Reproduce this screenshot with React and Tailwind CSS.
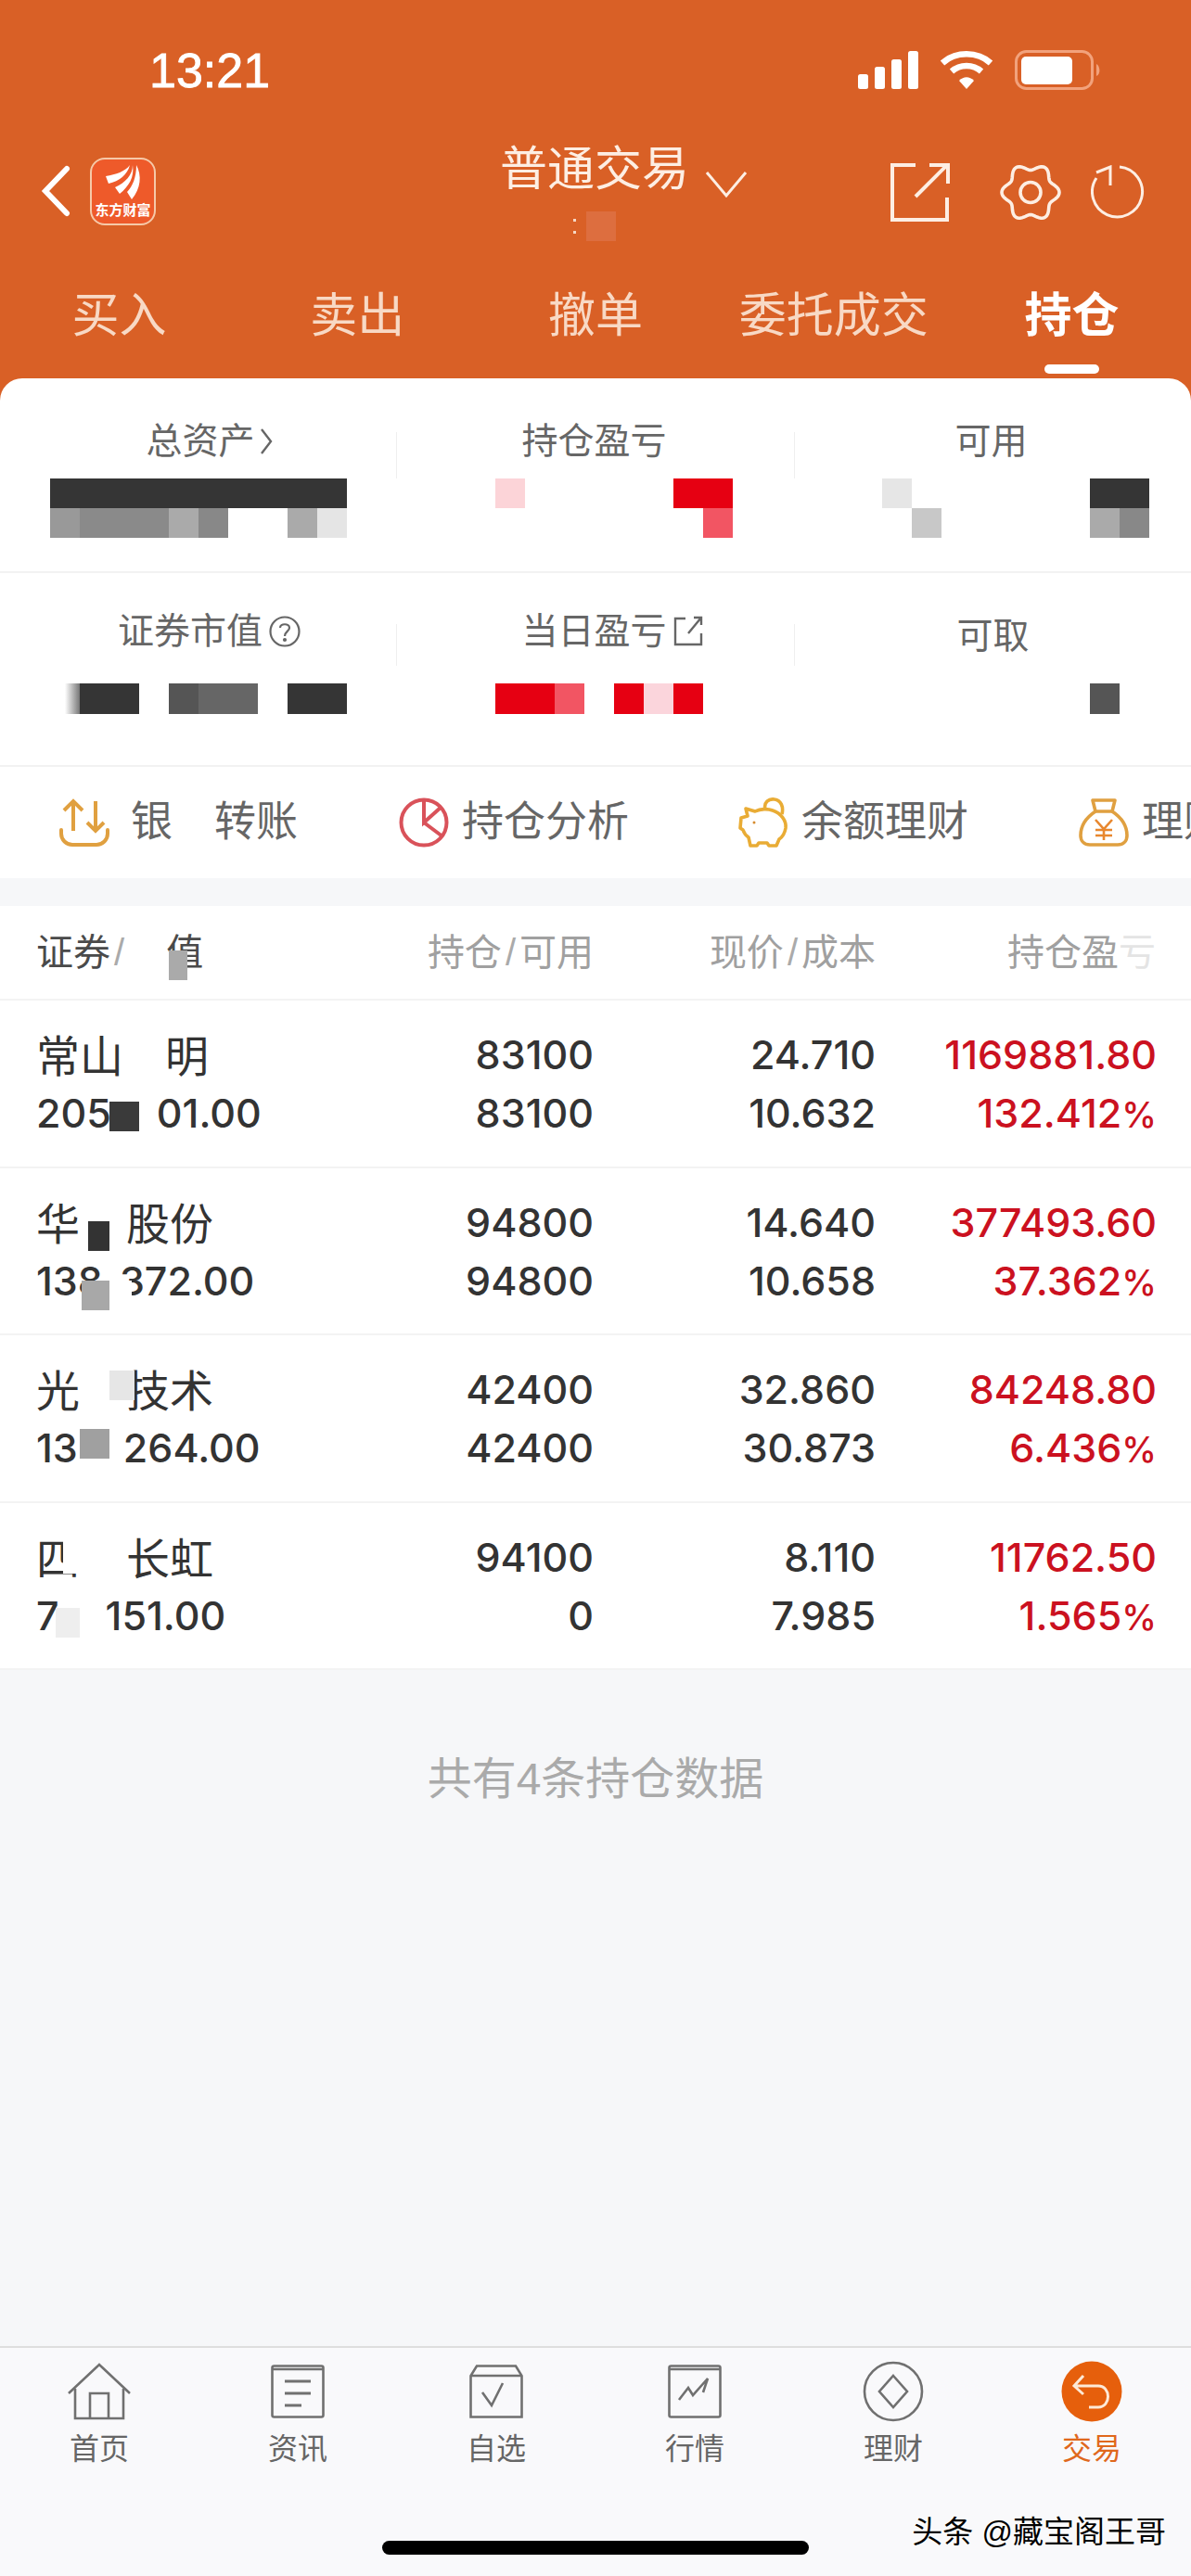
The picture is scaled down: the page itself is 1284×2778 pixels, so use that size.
import React from 'react'

const tabs = ['买入', '卖出', '撤单', '委托成交', '持仓']

// six-lobed cog outline for the settings icon
const gearPoints = Array.from({ length: 120 }, (_, i) => {
  const a = (i / 120) * Math.PI * 2
  const r = 27.5 + 3.5 * Math.cos(6 * a)
  return `${(33 + r * Math.cos(a)).toFixed(2)},${(31.5 + r * Math.sin(a)).toFixed(2)}`
}).join(' ')

const dark = 'bg-[#353535]'
const red = 'bg-[#e60012]'
const none = 'bg-transparent'

const summary = [
  [
    {
      cell: 'w-[428px]',
      shift: 'pl-[24px]',
      label: (
        <>
          总资产
          <svg width="16" height="32" viewBox="0 0 16 32" className="ml-1" fill="none" stroke="#666" strokeWidth="2.4">
            <path d="M3 3 L13 16 L3 29" />
          </svg>
        </>
      ),
      indent: 'ml-[54px]',
      mosaic: [
        [dark, dark, dark, dark, dark, dark, dark, dark, dark, dark],
        ['bg-[#999]', 'bg-[#8a8a8a]', 'bg-[#8a8a8a]', 'bg-[#8a8a8a]', 'bg-[#aaa]', 'bg-[#888]', none, none, 'bg-[#aaa]', 'bg-[#e5e5e5]'],
      ],
    },
    {
      cell: 'w-[429px]',
      shift: 'pr-[4px]',
      label: '持仓盈亏',
      indent: 'ml-[106px]',
      mosaic: [
        ['bg-[#fcd4d8]', none, none, none, none, none, red, red],
        [none, none, none, none, none, none, none, 'bg-[#f25563]'],
      ],
    },
    {
      cell: 'flex-1',
      shift: 'pr-[4px]',
      label: '可用',
      indent: 'ml-[94px]',
      mosaic: [
        ['bg-[#e6e6e6]', none, none, none, none, none, none, dark, dark],
        [none, 'bg-[#c8c8c8]', none, none, none, none, none, 'bg-[#aaa]', 'bg-[#888]'],
      ],
    },
  ],
  [
    {
      cell: 'w-[428px]',
      shift: 'pl-[24px]',
      label: (
        <>
          证券市值
          <svg width="36" height="36" viewBox="0 0 36 36" className="ml-1.5" fill="none" stroke="#666" strokeWidth="2.2">
            <circle cx="18" cy="18" r="15.5" />
            <path d="M13 14 C13 9 23 9 23 14 C23 18 18 18 18 23" />
            <circle cx="18" cy="27" r="1" fill="#666" />
          </svg>
        </>
      ),
      indent: 'ml-[54px]',
      mosaic: [['bg-linear-to-r from-transparent from-50% to-[#777]', dark, dark, none, 'bg-[#555]', 'bg-[#666]', 'bg-[#666]', none, dark, dark]],
    },
    {
      cell: 'w-[429px]',
      shift: 'pl-[36px]',
      label: (
        <>
          当日盈亏
          <svg width="34" height="36" viewBox="0 0 34 36" className="ml-1.5" fill="none" stroke="#666" strokeWidth="2.4">
            <path d="M14 4 H3 V32 H31 V20" />
            <path d="M17 20 L31 3 M23 3 H31 V11" />
          </svg>
        </>
      ),
      indent: 'ml-[106px]',
      mosaic: [[red, red, 'bg-[#f25563]', none, red, 'bg-[#fbd5dc]', red]],
    },
    {
      cell: 'flex-1',
      shift: 'pt-[10px]',
      label: '可取',
      indent: 'ml-[318px]',
      mosaic: [['bg-[#555]']],
    },
  ],
]

const positions = [
  {
    hold: '83100',
    free: '83100',
    price: '24.710',
    cost: '10.632',
    profit: '1169881.80',
    pct: '132.412',
    name: (
      <>
        常山<span className="inline-block w-[45px]" />明
      </>
    ),
    amount: (
      <>
        205<span className="inline-block w-[49px]" />01.00
      </>
    ),
    patches: <div className="absolute left-[79px] top-[109px] h-[32px] w-[32px] bg-[#3a3a3a]" />,
  },
  {
    hold: '94800',
    free: '94800',
    price: '14.640',
    cost: '10.658',
    profit: '377493.60',
    pct: '37.362',
    name: (
      <>
        华<span className="inline-block w-[50px]" />股份
      </>
    ),
    amount: (
      <>
        138<span className="inline-block w-[18px]" />372.00
      </>
    ),
    patches: (
      <>
        <div className="absolute left-[56px] top-[57px] h-[32px] w-[23px] bg-[#333]" />
        <div className="absolute left-[49px] top-[121px] h-[32px] w-[30px] bg-[#a8a8a8]" />
        <div className="absolute left-[79px] top-[121px] h-[32px] w-[24px] bg-white" />
      </>
    ),
  },
  {
    hold: '42400',
    free: '42400',
    price: '32.860',
    cost: '30.873',
    profit: '84248.80',
    pct: '6.436',
    name: (
      <>
        光<span className="inline-block w-[50px]" />技术
      </>
    ),
    amount: (
      <>
        13<span className="inline-block w-[49px]" />264.00
      </>
    ),
    patches: (
      <>
        <div className="absolute left-[79px] top-[38px] h-[32px] w-[27px] bg-[#e6e6e6]" />
        <div className="absolute left-[47px] top-[101px] h-[32px] w-[32px] bg-[#a0a0a0]" />
      </>
    ),
  },
  {
    hold: '94100',
    free: '0',
    price: '8.110',
    cost: '7.985',
    profit: '11762.50',
    pct: '1.565',
    name: (
      <>
        四<span className="inline-block w-[50px]" />长虹
      </>
    ),
    amount: (
      <>
        7<span className="inline-block w-[50px]" />151.00
      </>
    ),
    patches: (
      <>
        <div className="absolute left-[29px] top-[30px] h-[46px] w-[18px] bg-white" />
        <div className="absolute left-[21px] top-[113px] h-[32px] w-[26px] bg-[#eee]" />
      </>
    ),
  },
]

const navStroke = { fill: 'none', stroke: '#707070', strokeWidth: 2.6 }

const navItems = [
  {
    label: '首页',
    icon: (
      <svg width="68" height="62" viewBox="0 0 68 62" {...navStroke}>
        <path d="M1 33 L34 2 L67 33" />
        <path d="M8 28 V60 H60 V28" />
        <path d="M24 60 V33 H44 V60" />
      </svg>
    ),
  },
  {
    label: '资讯',
    icon: (
      <svg width="58" height="58" viewBox="0 0 58 58" {...navStroke}>
        <rect x="1.5" y="1.5" width="55" height="55" rx="2" />
        <path d="M2 5 H56" />
        <path d="M15 18 H43 M15 31 H43 M15 44 H33" strokeWidth="3.2" />
      </svg>
    ),
  },
  {
    label: '自选',
    icon: (
      <svg width="58" height="58" viewBox="0 0 58 58" {...navStroke}>
        <path d="M8 1.5 H50 L56.5 12 V56.5 H1.5 V12 Z" />
        <path d="M2 12 H56" />
        <path d="M14 30 L24 44 L36 20" />
      </svg>
    ),
  },
  {
    label: '行情',
    icon: (
      <svg width="58" height="58" viewBox="0 0 58 58" {...navStroke}>
        <rect x="1.5" y="1.5" width="55" height="55" rx="2" />
        <path d="M2 5 H56" />
        <path d="M12 38 L22 25 L27 33 L43 15 L38 30" />
      </svg>
    ),
  },
  {
    label: '理财',
    icon: (
      <svg width="66" height="66" viewBox="0 0 66 66" {...navStroke}>
        <circle cx="33" cy="33" r="31" />
        <path d="M33 16 L48 33 L33 50 L18 33 Z" />
      </svg>
    ),
  },
  {
    label: '交易',
    active: true,
    icon: (
      <svg width="66" height="66" viewBox="0 0 66 66">
        <circle cx="33" cy="33" r="32.5" fill="#e65f0c" />
        <path d="M24 16 L14 27 L24 36 M15 27 H40 C54 27 54 50 40 50 H30" fill="none" stroke="#fde9d6" strokeWidth="3" />
      </svg>
    ),
  },
]

function Mosaic({ rows, className, tall }) {
  return (
    <div className={className}>
      {rows.map((row, i) => (
        <div key={i} className="flex">
          {row.map((c, j) => (
            <div key={j} className={`w-8 ${tall ? 'h-[33px]' : 'h-8'} ${c}`} />
          ))}
        </div>
      ))}
    </div>
  )
}

function StatusBar() {
  return (
    <div className="flex h-[43px] items-center justify-between pl-[161px] pr-[96px]">
      <span className="mt-[2px] text-[52px] font-medium leading-[43px] text-white [-webkit-text-stroke:0.8px_white]">13:21</span>
      <div className="flex items-center">
        <svg width="66" height="42" viewBox="0 0 66 42" fill="#fff">
          <rect x="0" y="25" width="11" height="16" rx="2.5" />
          <rect x="18" y="17" width="11" height="24" rx="2.5" />
          <rect x="36" y="9" width="11" height="32" rx="2.5" />
          <rect x="54" y="0" width="11" height="41" rx="2.5" />
        </svg>
        <svg width="58" height="42" viewBox="0 0 58 42" className="ml-[22px]" fill="none" stroke="#fff" strokeWidth="6.5">
          <path d="M3 13 C17 0 41 0 55 13" />
          <path d="M13 22 C22 14 36 14 45 22" />
          <path d="M21 32 L29 41 L37 32 C32 27 26 27 21 32 Z" fill="#fff" stroke="none" />
        </svg>
        <svg width="94" height="43" viewBox="0 0 94 43" className="ml-[23px]">
          <rect x="1.5" y="1.5" width="82" height="40" rx="11" fill="none" stroke="#f2a27c" strokeWidth="3" />
          <rect x="7" y="7" width="55" height="30" rx="5" fill="#fff" />
          <path d="M88 15 C92 17 93 26 88 28 Z" fill="#f2a27c" />
        </svg>
      </div>
    </div>
  )
}

function TopBar() {
  return (
    <div className="mt-[61px] grid h-[102px] grid-cols-[1fr_200px_1fr]">
      <div className="flex items-start pl-[44px] pt-[12px]">
        <svg width="32" height="56" viewBox="0 0 32 56" className="mt-[8px]" fill="none" stroke="#fff" strokeWidth="6" strokeLinecap="round">
          <path d="M28 4 L5 28 L28 52" />
        </svg>
        <div className="ml-[21px] flex h-[73px] w-[71px] flex-col items-center rounded-[16px] border-2 border-[#f6c9a8] bg-[#ee5a2a]">
          <svg width="67" height="44" viewBox="0 0 67 44" fill="#fff" className="mt-[1px]">
            <path d="M41 5 C36 12 26 15 15 17 L18 25 C30 22 38 16 41 5 Z" />
            <path d="M44 5 C44 16 36 24 25 29 L30 36 C40 28 46 18 44 5 Z" />
            <path d="M48 5 C48 18 44 28 38 34 L43 42 C53 30 54 16 48 5 Z" />
          </svg>
          <span className="text-[15px] font-bold leading-[20px] text-white">东方财富</span>
        </div>
      </div>
      <div className="relative">
        <div className="-ml-[3px] whitespace-nowrap pt-[3px] text-[51px] leading-[44px] text-[#fdeee3]">普通交易</div>
        <svg width="46" height="30" viewBox="0 0 46 30" className="absolute left-[218px] top-[26px]" fill="none" stroke="#fdeee3" strokeWidth="3">
          <path d="M2 2 L23 27 L44 2" />
        </svg>
        <div className="ml-[76px] mt-[23px] flex h-[32px]">
          <div className="flex w-[14px] flex-col justify-between py-[8px]">
            <div className="h-[3px] w-[3px] bg-[#f5d8c5]" />
            <div className="h-[3px] w-[3px] bg-[#f5d8c5]" />
          </div>
          <div className="h-[32px] w-[32px] bg-[#dd6e3f]" />
        </div>
      </div>
      <div className="flex items-start justify-end pr-[50px] pt-[18px]">
        <svg width="64" height="63" viewBox="0 0 64 63" fill="none" stroke="#fdeee3" strokeWidth="4">
          <path d="M27 2 H2 V61 H61 V37" />
          <path d="M27 36 L60 3" />
          <path d="M42 2 H62 V22" />
        </svg>
        <svg width="66" height="63" viewBox="0 0 66 63" className="ml-[54px]" fill="none" stroke="#fdeee3" strokeWidth="3.6">
          <polygon points={gearPoints} strokeLinejoin="round" />
          <circle cx="33" cy="31.5" r="11" />
        </svg>
        <svg width="58" height="58" viewBox="0 0 58 58" className="ml-[32px] mt-[2px]" fill="none" stroke="#fdeee3" strokeWidth="3">
          <path d="M31 2 A27 27 0 1 1 6 14" />
          <path d="M6 8 L21 2 V22" />
        </svg>
      </div>
    </div>
  )
}

function Tabs() {
  return (
    <div className="mt-[51px] grid h-[97px] w-[1284px] grid-cols-5">
      {tabs.map((t) => {
        const active = t === '持仓'
        return (
          <div key={t} className="flex flex-col items-center">
            <span className={`text-[51px] leading-[60px] ${active ? 'font-bold text-white' : 'text-[#f8d9c5]'}`}>{t}</span>
            {active && <div className="mt-[22px] h-[10px] w-[59px] rounded-full bg-white" />}
          </div>
        )
      })}
    </div>
  )
}

function Summary() {
  return (
    <div className="rounded-t-[24px] bg-white">
      {summary.map((row, r) => (
        <div key={r} className={`flex border-b-2 border-[#f2f2f2] ${r === 0 ? 'h-[210px]' : 'h-[209px]'}`}>
          {row.map((c, i) => (
            <div key={i} className={`relative ${c.cell}`}>
              <div className={`flex h-[46px] items-center justify-center text-[39px] leading-[46px] text-[#666] ${r === 0 ? 'mt-[45px]' : 'mt-[40px]'} ${c.shift}`}>
                {c.label}
              </div>
              {i < 2 && <div className={`absolute right-0 w-px bg-[#efefef] ${r === 0 ? 'top-[58px] h-[50px]' : 'top-[55px] h-[45px]'}`} />}
              <Mosaic rows={c.mosaic} tall={r === 1} className={`${c.indent} ${r === 0 ? 'mt-[17px]' : 'mt-[33px]'}`} />
            </div>
          ))}
        </div>
      ))}
    </div>
  )
}

function QuickActions() {
  return (
    <div className="flex h-[120px] items-center overflow-hidden bg-white pl-[64px] text-[45px] text-[#666]">
      <svg width="54" height="52" viewBox="0 0 54 52" className="shrink-0" fill="none" stroke="#e0a040" strokeWidth="4">
        <path d="M15 35 V3 M5 13 L15 3 L25 13" />
        <path d="M39 3 V35 M30 26 L39 35 L48 26" />
        <path d="M2 34 V38 A12 12 0 0 0 14 50 H40 A12 12 0 0 0 52 38 V34" strokeLinecap="round" />
      </svg>
      <span className="ml-[23px] shrink-0">
        银<span className="inline-block w-[45px]" />转账
      </span>
      <svg width="54" height="54" viewBox="0 0 54 54" className="ml-[109px] shrink-0" fill="none" stroke="#d9525a" strokeWidth="4">
        <circle cx="27" cy="27" r="24.5" />
        <path d="M27 3 V27 L46 10 M27 27 L47 42" />
      </svg>
      <span className="ml-[14px] shrink-0">持仓分析</span>
      <svg width="54" height="54" viewBox="0 0 54 54" className="ml-[118px] shrink-0" fill="none" stroke="#e9ac35" strokeWidth="3.6">
        <path d="M3 22 L10 20 L8 12 L18 15 C24 12 32 12 37 14 C46 17 52 25 51 33 C50 39 47 43 44 45 L41 52 H33 L31 49 H22 L20 52 H13 L11 43 C8 41 6 38 5 35 L2 33 Z" strokeLinejoin="round" />
        <path d="M29 13 C27 5 33 1 39 2 C46 3 49 10 47 18" />
        <circle cx="17" cy="27" r="1.5" fill="#d68b2e" stroke="none" />
      </svg>
      <span className="ml-[14px] shrink-0">余额理财</span>
      <svg width="54" height="52" viewBox="0 0 54 52" className="ml-[119px] shrink-0" fill="none" stroke="#e0a040" strokeWidth="3.6">
        <path d="M15 2 H39 L36 14 H18 Z" strokeLinejoin="round" />
        <path d="M18 14 C6 22 2 32 2 40 C2 46 6 50 12 50 H42 C48 50 52 46 52 40 C52 32 48 22 36 14" />
        <path d="M18 23 L27 33 L36 23 M27 33 V45 M18 34 H36 M18 40 H36" stroke="#e8872e" strokeWidth="2.6" />
      </svg>
      <span className="ml-[14px] shrink-0">理财</span>
    </div>
  )
}

function Slash() {
  return <span className="mx-[4px] text-[#aaa]">/</span>
}

function TableHeader() {
  return (
    <div className="flex h-[102px] items-center border-b-2 border-[#f3f3f3] bg-white text-[40px] text-[#a0a0a0]">
      <div className="relative w-[420px] pl-[39px] text-[#4a4a4a]">
        证券
        <Slash />
        <span className="inline-block w-[41px]" />值
        <div className="absolute left-[182px] top-[28px] h-[32px] w-[20px] bg-[#aaa]" />
      </div>
      <div className="w-[220px] text-right">
        持仓
        <Slash />
        可用
      </div>
      <div className="w-[304px] text-right">
        现价
        <Slash />
        成本
      </div>
      <div className="w-[302px] text-right">
        持仓盈<span className="text-[#e4e4e4]">亏</span>
      </div>
    </div>
  )
}

function Row({ p }) {
  return (
    <div className="flex h-[180.5px] border-b-2 border-[#f3f3f3] bg-white pt-[27px] font-['Inter','Noto_Sans_CJK_SC',sans-serif] text-[43px] font-medium leading-[63px] text-[#333]">
      <div className="relative w-[420px] pl-[39px]">
        <div className="pt-[3px] text-[47px] leading-[60px] font-normal">{p.name}</div>
        <div>{p.amount}</div>
        <div className="absolute left-[39px] top-[-27px]">{p.patches}</div>
      </div>
      <div className="w-[220px] text-right">
        <div>{p.hold}</div>
        <div>{p.free}</div>
      </div>
      <div className="w-[304px] text-right">
        <div>{p.price}</div>
        <div>{p.cost}</div>
      </div>
      <div className="w-[303px] text-right text-[#cb1120]">
        <div>{p.profit}</div>
        <div>
          {p.pct}
          <span className="text-[38px]">%</span>
        </div>
      </div>
    </div>
  )
}

function BottomNav() {
  return (
    <div className="relative h-[248px] border-t-2 border-[#dedede] bg-[#f9f9fb] pt-[14px]">
      <div className="grid grid-cols-6">
        {navItems.map((n) => (
          <div key={n.label} className="flex flex-col items-center">
            <div className="flex h-[66px] items-center justify-center">{n.icon}</div>
            <span className={`mt-[9px] text-[32px] leading-[40px] ${n.active ? 'text-[#e0681c]' : 'text-[#666]'}`}>{n.label}</span>
          </div>
        ))}
      </div>
      <div className="mt-[79px] flex justify-center">
        <div className="h-[15px] w-[460px] rounded-full bg-black" />
      </div>
      <div className="absolute right-[27px] top-[179px] text-[33px] leading-[40px] text-black [text-shadow:0_0_3px_#fff,0_0_3px_#fff,0_0_3px_#fff]">
        头条 @藏宝阁王哥
      </div>
    </div>
  )
}

export default function App() {
  return (
    <div className="flex h-[2778px] w-[1284px] flex-col overflow-hidden bg-[#f6f7f9] font-['Liberation_Sans','Noto_Sans_CJK_SC',sans-serif]">
      {/* orange header, the card's round corners sit on it */}
      <div className="bg-[#d96026] pt-[54px]">
        <StatusBar />
        <TopBar />
        <Tabs />
        <Summary />
      </div>
      <QuickActions />
      <div className="mt-[30px]">
        <TableHeader />
        {positions.map((p) => (
          <Row key={p.profit} p={p} />
        ))}
      </div>
      <div className="mt-[88px] flex-1 text-center text-[48px] leading-[60px] text-[#aaa]">共有4条持仓数据</div>
      <BottomNav />
    </div>
  )
}
